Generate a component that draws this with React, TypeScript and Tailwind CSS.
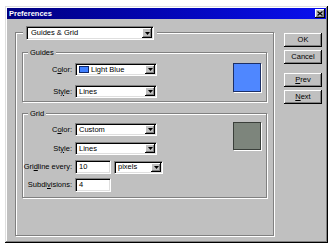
import React from "react";

const sunken =
  "bg-white border border-[#808080] border-b-white border-r-white shadow-[inset_1px_1px_0_#000,inset_-1px_-1px_0_#dfdfdf]";
const raised =
  "bg-[#c0c0c0] shadow-[inset_-1px_-1px_0_#000,inset_1px_1px_0_#fff,inset_-2px_-2px_0_#808080]";
const etched =
  "border border-[#808080] shadow-[inset_1px_1px_0_#fff,1px_1px_0_#fff]";

function Arrow() {
  return (
    <div className={`${raised} w-[10px] h-full flex items-center justify-center shrink-0`}>
      <svg width="5" height="3" viewBox="0 0 5 3">
        <path d="M0 0h5L2.5 3z" fill="#000" />
      </svg>
    </div>
  );
}

function Select({ width, children }: { width: string; children: React.ReactNode }) {
  return (
    <div className={`${sunken} ${width} h-[13px] flex items-stretch p-[1px]`}>
      <div className="flex-1 flex items-center pl-[2px] gap-[2px] leading-none">{children}</div>
      <Arrow />
    </div>
  );
}

function Field({ width, value }: { width: string; value: string }) {
  return (
    <div className={`${sunken} ${width} h-[14px] flex items-center pl-[3px] leading-none`}>{value}</div>
  );
}

function Row({ label, children, className = "" }: { label: React.ReactNode; children: React.ReactNode; className?: string }) {
  return (
    <div className={`flex items-center ${className}`}>
      <div className="w-[52px] text-right pr-[3px] whitespace-nowrap leading-none">{label}</div>
      {children}
    </div>
  );
}

function Button({ children, className = "" }: { children: React.ReactNode; className?: string }) {
  return (
    <div className={`${raised} w-[38px] h-[14px] flex items-center justify-center leading-none ${className}`}>
      {children}
    </div>
  );
}

function Legend({ children }: { children: React.ReactNode }) {
  return (
    <div className="-mt-[5px] ml-[5px] px-[2px] self-start bg-[#c0c0c0] leading-[9px]">{children}</div>
  );
}

export default function App() {
  return (
    <div className="w-[335px] h-[250px] bg-white pt-[6px] pl-[5px] font-['Liberation_Sans',Arial,sans-serif] text-[7.5px] text-black">
      <div className="w-[323px] h-[237px] bg-[#c0c0c0] p-[2px] shadow-[inset_-1px_-1px_0_#000,inset_1px_1px_0_#dfdfdf,inset_-2px_-2px_0_#808080,inset_2px_2px_0_#fff] flex flex-col">
        <div className="h-[11px] flex items-center justify-between pl-[2px] pr-[1px] bg-linear-to-r from-[#000080] to-[#0a10f0]">
          <span className="text-white font-bold leading-none">Preferences</span>
          <div className={`${raised} w-[10px] h-[9px] flex items-center justify-center`}>
            <svg width="6" height="5" viewBox="0 0 6 5">
              <path d="M0.5 0.5l5 4M5.5 0.5l-5 4" stroke="#000" strokeWidth="1.3" />
            </svg>
          </div>
        </div>

        <div className="flex pt-[7px] pl-[8px]">
          <div className={`${etched} w-[259px] h-[204px] mt-[6px] flex flex-col`}>
            <div className="-mt-[7px] ml-[7px] px-[3px] self-start bg-[#c0c0c0]">
              <div className={`${sunken} w-[128px] h-[14px] flex items-stretch p-[1px]`}>
                <div className="flex-1 flex items-center pl-[3px] leading-none">Guides &amp; Grid</div>
                <Arrow />
              </div>
            </div>

            <div className={`${etched} mx-[6px] mt-[12px] h-[50px] flex flex-col`}>
              <Legend>Guides</Legend>
              <div className="flex justify-between mt-[6px] pr-[5px]">
                <div className="flex flex-col gap-[9px]">
                  <Row label={<>C<u>o</u>lor:</>}>
                    <Select width="w-[82px]">
                      <span className="w-[10px] h-[7px] bg-[#3f7fff] border border-[#10286a] shrink-0" />
                      <span>Light Blue</span>
                    </Select>
                  </Row>
                  <Row label={<>St<u>y</u>le:</>}>
                    <Select width="w-[82px]">Lines</Select>
                  </Row>
                </div>
                <div className="w-[28px] h-[29px] bg-[#4f87ff] border border-[#1c2f66] shadow-[1px_1px_0_#fff]" />
              </div>
            </div>

            <div className={`${etched} mx-[6px] mt-[11px] h-[85px] flex flex-col`}>
              <Legend>Grid</Legend>
              <div className="flex justify-between mt-[5px] pr-[5px]">
                <div className="flex flex-col">
                  <Row label={<>C<u>o</u>lor:</>}>
                    <Select width="w-[82px]">Custom</Select>
                  </Row>
                  <Row className="mt-[6px]" label={<>St<u>y</u>le:</>}>
                    <Select width="w-[82px]">Lines</Select>
                  </Row>
                  <Row className="mt-[5px]" label={<>Gri<u>d</u>line every:</>}>
                    <Field width="w-[36px]" value="10" />
                    <div className="ml-[3px]">
                      <Select width="w-[49px]">pixels</Select>
                    </div>
                  </Row>
                  <Row className="mt-[4px]" label={<>Subdi<u>v</u>isions:</>}>
                    <Field width="w-[36px]" value="4" />
                  </Row>
                </div>
                <div className="-mt-[1px] w-[28px] h-[28px] bg-[#7d857c] border border-[#3a3f3a] shadow-[1px_1px_0_#fff]" />
              </div>
            </div>
          </div>

          <div className="ml-[10px] mt-[7px] flex flex-col">
            <Button>OK</Button>
            <Button className="mt-[3px]">Cancel</Button>
            <Button className="mt-[9px]"><span><u>P</u>rev</span></Button>
            <Button className="mt-[3px]"><span><u>N</u>ext</span></Button>
          </div>
        </div>
      </div>
    </div>
  );
}
